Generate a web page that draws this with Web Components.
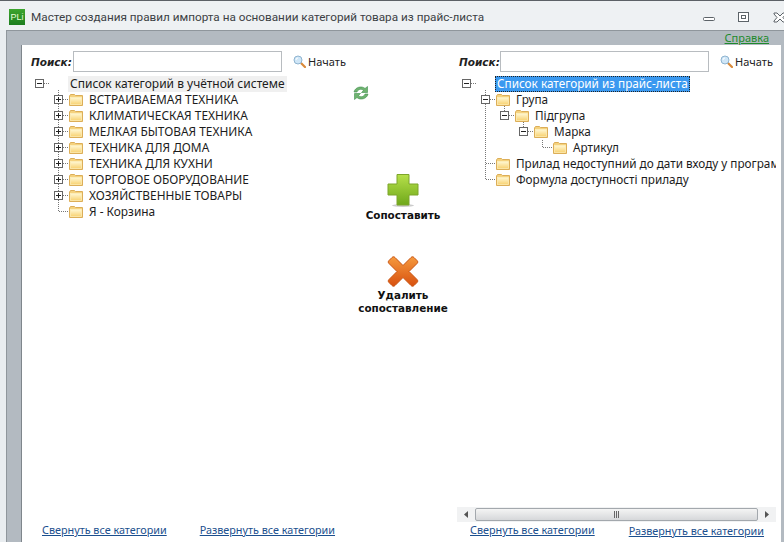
<!DOCTYPE html>
<html lang="ru"><head><meta charset="utf-8"><title>Мастер</title>
<style>html,body{margin:0;padding:0;background:#fff}body{width:784px;height:542px;overflow:hidden;font-family:"Noto Sans",sans-serif}</style>
</head><body>
<pli-window>
  <pli-titlebar slot="title">Мастер создания правил импорта на основании категорий товара из прайс-листа</pli-titlebar>
  <pli-panel slot="left" style="--pad-left:8px;--pad-right:0px;--search-left:1px;--link-left:12px;--link-gap:33px;--lbl:42px;--fs:11.9px">
    <pli-search slot="search"></pli-search>
    <pli-row cells="m b" root style="--fs:12px;--lh:16px">Список категорий в учётной системе</pli-row>
    <pli-row cells="b P" folder>ВСТРАИВАЕМАЯ ТЕХНИКА</pli-row>
    <pli-row cells="b P" folder>КЛИМАТИЧЕСКАЯ ТЕХНИКА</pli-row>
    <pli-row cells="b P" folder>МЕЛКАЯ БЫТОВАЯ ТЕХНИКА</pli-row>
    <pli-row cells="b P" folder>ТЕХНИКА ДЛЯ ДОМА</pli-row>
    <pli-row cells="b P" folder>ТЕХНИКА ДЛЯ КУХНИ</pli-row>
    <pli-row cells="b P" folder>ТОРГОВОЕ ОБОРУДОВАНИЕ</pli-row>
    <pli-row cells="b P" folder>ХОЗЯЙСТВЕННЫЕ ТОВАРЫ</pli-row>
    <pli-row cells="b L" folder>Я - Корзина</pli-row>
    <a slot="link1">Свернуть все категории</a>
    <a slot="link2">Развернуть все категории</a>
  </pli-panel>
  <pli-actions slot="center"></pli-actions>
  <pli-panel slot="right" scroll style="--pad-left:0px;--pad-right:5px;--search-left:2px;--link-left:13px;--link-gap:34px;--lbl:41px;--fs:11.75px">
    <pli-search slot="search"></pli-search>
    <pli-row cells="m b" root selected>Список категорий из прайс-листа</pli-row>
    <pli-row cells="b M" folder>Група</pli-row>
    <pli-row cells="b i N" folder>Підгрупа</pli-row>
    <pli-row cells="b i b N" folder>Марка</pli-row>
    <pli-row cells="b i b b L" folder>Артикул</pli-row>
    <pli-row cells="b T" folder>Прилад недоступний до дати входу у програму</pli-row>
    <pli-row cells="b L" folder>Формула доступності приладу</pli-row>
    <a slot="link1">Свернуть все категории</a>
    <a slot="link2" style="padding-top:1px">Развернуть все категории</a>
  </pli-panel>
</pli-window>
<script>
const def=(n,html,extra)=>{customElements.define(n,class extends HTMLElement{
  constructor(){super();this.attachShadow({mode:'open'}).innerHTML=typeof html==='function'?html(this):html;}
  connectedCallback(){extra&&extra(this);}
});};

def('pli-window',`<style>
:host{display:flex;flex-direction:column;width:784px;height:542px;background:#e9edf0;box-sizing:border-box;border-top:1px solid #5c6166;overflow:hidden}
.body{flex:1;min-height:0;margin-left:6px;background:#b3bac1;border-top:1px solid #8f969c;border-left:1px solid #8f969c;display:flex;flex-direction:column;min-width:0}
.help{height:14px;display:flex;justify-content:flex-end;padding-right:15px;box-sizing:border-box}
.help a{font:11px/14px "Noto Sans",sans-serif;color:#1d8a2c;text-decoration:underline}
.main{flex:1;min-height:0;margin:0 3px 0 14px;background:#fff;border-left:1px solid #7f868c;display:grid;grid-template-columns:327px 108px 324px}
</style><slot name="title"></slot>
<div class="body"><div class="help"><a>Справка</a></div>
<div class="main"><slot name="left"></slot><slot name="center"></slot><slot name="right"></slot></div></div>`);

def('pli-titlebar',`<style>
:host{display:flex;align-items:center;height:29px;box-sizing:border-box;padding-top:3px;flex:none;padding-left:9px;background:#eef1f3;overflow:hidden}
.logo{width:16px;height:16px;flex:none;background:linear-gradient(#3da52f,#1d7d1f);color:#e8ffd8;font:9px/16px "Liberation Sans",sans-serif;text-align:center;margin-right:6px}
.t{font:11.74px/16px Roboto,sans-serif;color:#3c4044;white-space:nowrap;flex:1}
svg{flex:none;display:block}
.b{display:flex;align-items:center;margin-right:-7px}
.b svg+svg{margin-left:23px}
</style><span class="logo">PLi</span><span class="t"><slot></slot></span>
<span class="b">
<svg width="12" height="12" viewBox="0 0 12 12"><rect x="0.5" y="6.5" width="11" height="3" rx="1" fill="#fff" stroke="#5c6368"/></svg>
<svg width="12" height="11" viewBox="0 0 12 11"><rect x="0.5" y="0.5" width="10" height="9" fill="#fff" stroke="#5c6368"/><rect x="3.5" y="3.5" width="4" height="3" fill="none" stroke="#5c6368"/></svg>
<svg width="18" height="11" viewBox="0 0 18 11"><path d="M1 1h3l3 3 3-3h3v1l-3 3.500 3 3.500v1h-3l-3-3-3 3h-3v-1l3-3.500-3-3.500z" fill="#fff" stroke="#5c6368"/></svg>
</span>`);

def('pli-search',`<style>
:host{display:flex;align-items:center;height:21px;margin:6px 0 4px}
b{font:italic bold 10.5px "DejaVu Sans",sans-serif;color:#222;width:var(--lbl);flex:none;white-space:nowrap}
.i{width:209px;height:21px;box-sizing:border-box;border:1px solid #b8bcc0;background:#fff;flex:none}
svg{margin-left:11px;flex:none}
span{font:11px "Noto Sans",sans-serif;color:#222;margin-left:2px}
</style><b>Поиск:</b><div class="i"></div>
<svg width="13" height="13" viewBox="0 0 13 13"><path d="M7.500 7.500L12 12" stroke="#d98a3a" stroke-width="2.200" stroke-linecap="round"/><circle cx="5" cy="5" r="4" fill="#cfe6f7" stroke="#8fb4d0"/><path d="M3 5a2 2 0 0 1 2-2" stroke="#fff" fill="none"/></svg>
<span>Начать</span>`);

const cell=t=>{
  const dot='stroke="#777" stroke-dasharray="1 1"';
  const line=(a,b,c,d)=>`<line x1="${a}" y1="${b}" x2="${c}" y2="${d}" ${dot}/>`;
  let s='';
  const box=(plus)=>`<rect x="5.500" y="3.500" width="8" height="8" fill="#fff" stroke="#666"/><path d="M7 7.500h5${plus?'M9.500 5v5':''}" stroke="#222" fill="none"/>`;
  if(t==='m') s=line(14,7.5,19,7.5)+box(0);
  if(t==='P') s=line(9.5,-2,9.5,16)+line(14,7.5,19,7.5)+box(1);
  if(t==='M') s=line(9.5,-2,9.5,16)+line(14,7.5,19,7.5)+box(0);
  if(t==='N') s=line(9.5,-2,9.5,4)+line(14,7.5,19,7.5)+box(0);
  if(t==='i') s=line(9.5,0,9.5,16);
  if(t==='T') s=line(9.5,0,9.5,16)+line(10,7.5,19,7.5);
  if(t==='L') s=line(9.5,0,9.5,8)+line(10,7.5,19,7.5);
  return `<svg width="19" height="16" viewBox="0 0 19 16" style="overflow:visible;flex:none;display:block">${s}</svg>`;
};
const folder=`<svg class="f" width="14" height="12" viewBox="0 0 14 12"><defs><linearGradient id="g" x1="0" y1="0" x2="0" y2="1"><stop offset="0" stop-color="#fff8d4"/><stop offset="1" stop-color="#f8d272"/></linearGradient></defs><path d="M.5 2V11.500H13.500V1.500H6.500L5.500.5H1.500Z" fill="#f5d27e" stroke="#dcae58"/><rect x="1.500" y="3.500" width="11" height="7" fill="url(#g)" stroke="#fdf2c4" stroke-width=".6"/></svg>`;
def('pli-row',el=>{
  const cells=(el.getAttribute('cells')||'').split(' ').map(cell).join('');
  return `<style>
:host{display:flex;align-items:center;height:16px;white-space:nowrap;font:var(--fs,12px)/var(--lh,14px) "Noto Sans",sans-serif;color:#1c1c1c}
.f{flex:none;margin:0 4px 0 1px;display:block}
.x{display:block;padding:0 2px;height:16px}
:host([root]) .x{background:#f0f0f0}
:host([selected]) .x{background:#3b99f0;color:#fff;outline:1px dotted #222;outline-offset:-1px}
</style>${cells}${el.hasAttribute('folder')?folder:''}<span class="x"><slot></slot></span>`;
});

def('pli-panel',el=>`<style>
:host{display:flex;flex-direction:column;min-width:0;min-height:0;padding-left:var(--pad-left);padding-right:var(--pad-right);box-sizing:border-box;overflow:hidden}
.s{padding-left:var(--search-left)}
.tree{flex:1;min-height:0;overflow:hidden}
.links{height:20px;flex:none;box-sizing:border-box;display:flex;gap:var(--link-gap);padding-left:var(--link-left);align-items:flex-start}
::slotted(a){font:10.8px/15px "Noto Sans",sans-serif;color:#1b4f8e;text-decoration:underline;white-space:nowrap;display:block}
</style>
<div class="s"><slot name="search"></slot></div>
<div class="tree"><slot></slot></div>
${el.hasAttribute('scroll')?'<pli-scrollbar></pli-scrollbar>':''}
<div class="links"><slot name="link1"></slot><slot name="link2"></slot></div>`);

def('pli-scrollbar',`<style>
:host{display:flex;align-items:center;height:15px;flex:none;background:#f1f2f3}
.a{width:18px;flex:none;display:flex;justify-content:center}
.th{flex:1;height:13px;margin:0;border:1px solid #a3a8ad;border-radius:2px;box-sizing:border-box;background:linear-gradient(#f4f4f4,#d6d8da);display:flex;align-items:center;justify-content:center}
.g{width:1px;height:7px;background:#666;box-shadow:2px 0 #666,4px 0 #666;margin-right:4px}
svg{display:block}
</style><div class="a"><svg width="4" height="7"><path d="M4 0v7L0 3.500z" fill="#555"/></svg></div><div class="th"><div class="g"></div></div><div class="a"><svg width="4" height="7"><path d="M0 0v7l4-3.500z" fill="#555"/></svg></div>`);

def('pli-action',`<style>
:host{display:flex;flex-direction:column;align-items:center;text-align:center;font:bold 10.4px/13px "DejaVu Sans",sans-serif;color:#111}
</style><slot name="icon"></slot><slot></slot>`);

def('pli-actions',`<style>
:host{display:flex;flex-direction:column;align-items:stretch;min-width:0}
.r{height:16px;margin:40px 0 0 3px}
.go{margin-top:72px}
.del{margin-top:34px}
svg{display:block}
</style>
<div class="r"><svg width="18" height="16" viewBox="0 0 18 16"><g fill="#6fb36f" stroke="#3f8f4f" stroke-width=".6"><path d="M2 7C3 2 10 .5 13 3.500L15.500 1.500V7.500H9.500L11.500 5.500C9.500 3.500 6 4 5 7Z"/><path d="M16 9C15 14 8 15.500 5 12.500L2.500 14.500V8.500H8.500L6.500 10.500C8.500 12.500 12 12 13 9Z"/></g></svg></div>
<pli-action class="go"><svg slot="icon" width="32" height="36" viewBox="0 0 32 36"><defs><linearGradient id="gg" x1="0" y1="0" x2="0" y2="1"><stop offset="0" stop-color="#b6e04a"/><stop offset="1" stop-color="#6fa81a"/></linearGradient></defs><ellipse cx="16" cy="32.500" rx="11" ry="1.500" fill="#ccc"/><path d="M10 1.500H22V11H31V22H22V32H10V22H1V11H10Z" fill="url(#gg)" stroke="#7da52a"/></svg>Сопоставить</pli-action>
<pli-action class="del"><svg slot="icon" width="32" height="33" viewBox="0 0 32 33"><defs><linearGradient id="rg" x1="0" y1="0" x2="0" y2="1"><stop offset="0" stop-color="#f59a3e"/><stop offset="1" stop-color="#d8500f"/></linearGradient></defs><path d="M8 1.500L16 9.500 24 1.500C25 .5 26 .5 27 1.500L30 4.500C31 5.500 31 6.500 30 7.500L22 15.500 30 23.500C31 24.500 31 25.500 30 26.500L27 29.500C26 30.500 25 30.500 24 29.500L16 21.500 8 29.500C7 30.500 6 30.500 5 29.500L2 26.500C1 25.500 1 24.500 2 23.500L10 15.500 2 7.500C1 6.500 1 5.500 2 4.500L5 1.500C6 .5 7 .5 8 1.500Z" fill="url(#rg)" stroke="#c8520f"/></svg>Удалить<br>сопоставление</pli-action>`);
</script>
</body></html>
